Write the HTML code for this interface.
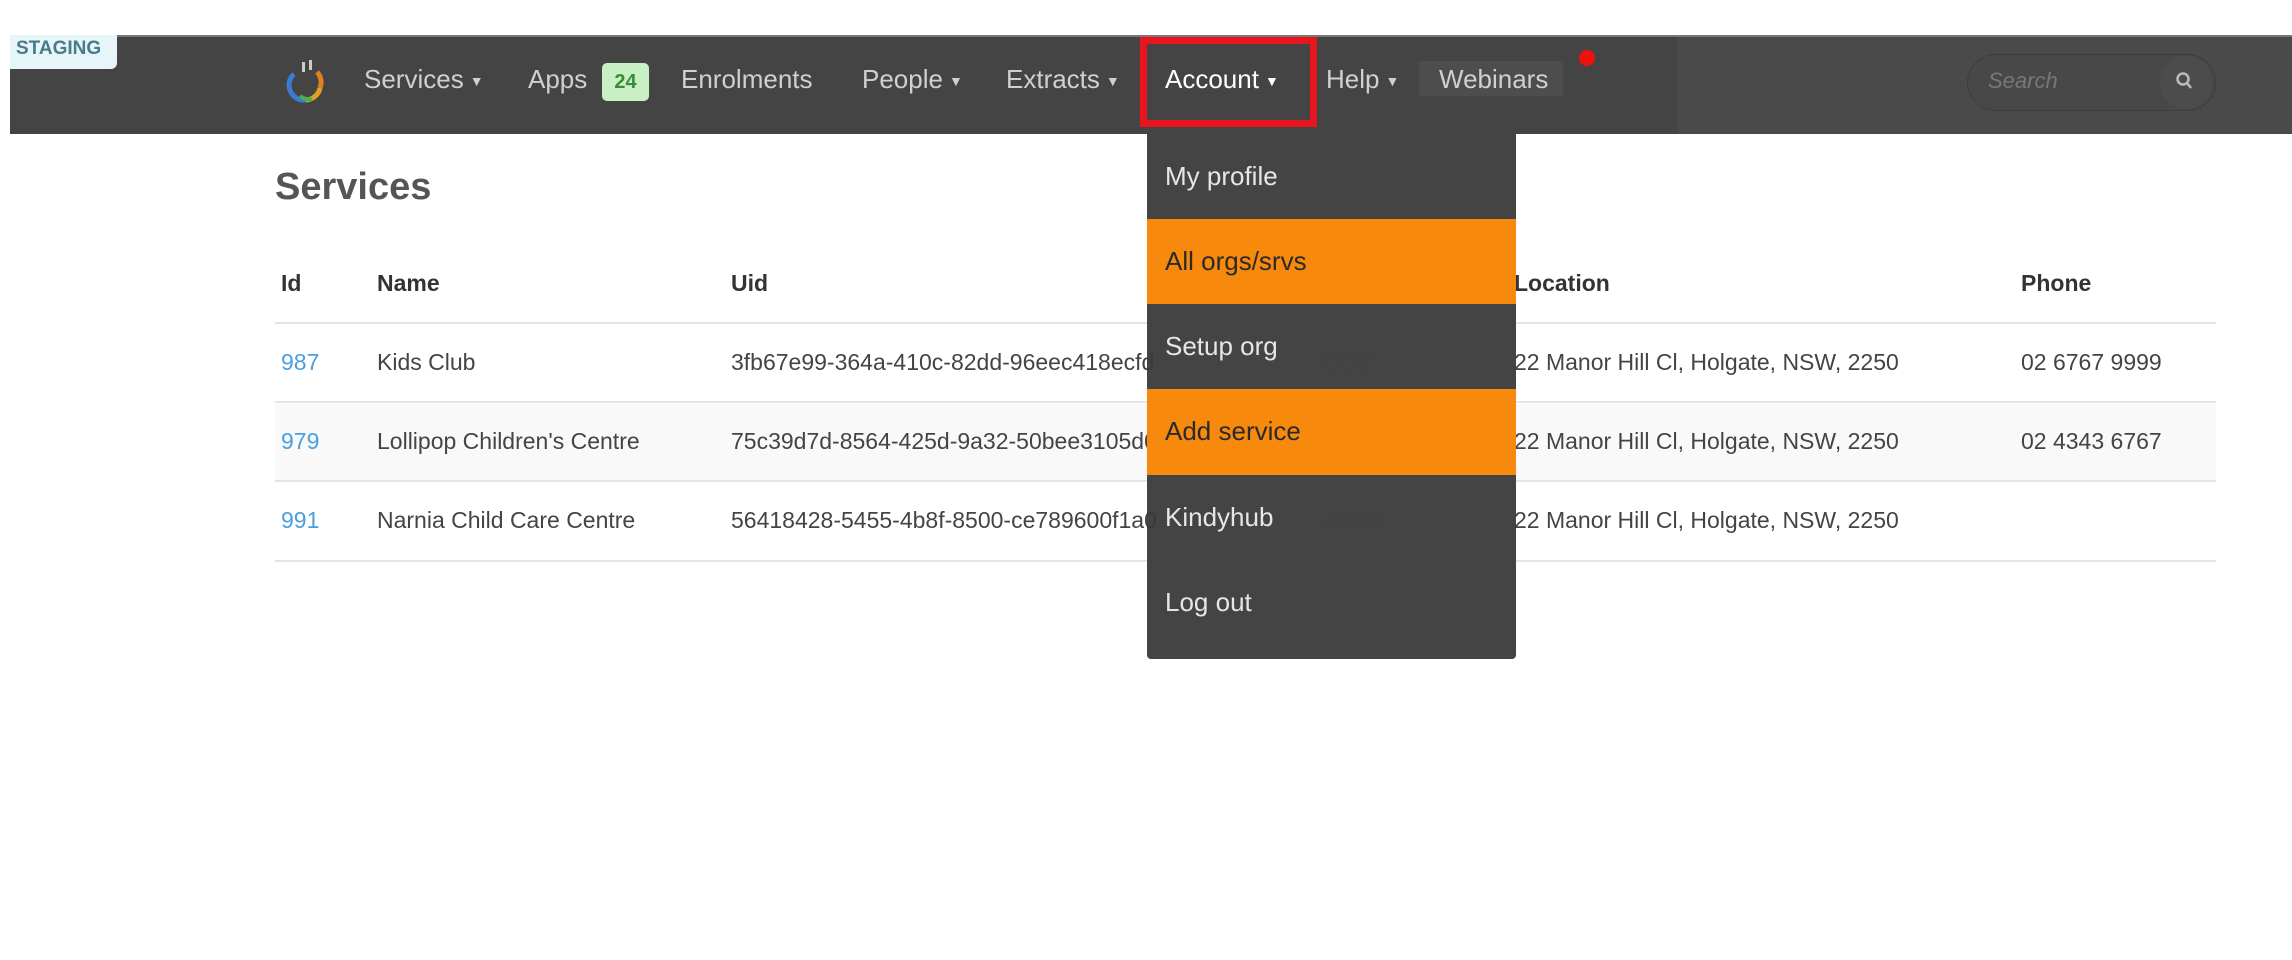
<!DOCTYPE html>
<html><head><meta charset="utf-8"><style>
*{margin:0;padding:0;box-sizing:border-box}
body{width:2292px;height:960px;background:#fff;font-family:"Liberation Sans",sans-serif;position:relative;overflow:hidden}
.a{position:absolute;white-space:nowrap}
.nav{left:10px;top:35px;width:2282px;height:99px;background:#4a4a4a;border-top:2px solid #777}
.navl{left:10px;top:37px;width:1668px;height:97px;background:#444}
.nt{top:62px;font-size:26px;color:#d0d0d0;line-height:34px}
.car{font-size:14px;vertical-align:middle;margin-left:6px}
.dd{left:1147px;top:134px;width:369px;height:525px;background:rgba(58,58,58,0.95);border-radius:0 0 4px 4px}
.it{position:absolute;left:0;width:369px;height:85px;font-size:26px;color:#e6e6e6;padding-left:18px;line-height:85px}
.or{background:rgba(255,140,10,0.96);color:#2a2a2a}
.th{font-size:23px;font-weight:bold;color:#333;top:270px}
.td{font-size:23px;color:#444}
.ln{left:275px;width:1941px;height:2px;background:#e3e5e8}
</style></head><body>
<div class="a nav"></div>
<div class="a navl"></div>
<div class="a" style="left:10px;top:35px;width:107px;height:34px;background:#e6f5f8;border-radius:0 0 6px 0;font-size:19px;font-weight:bold;color:#4a7b8c;padding:3px 0 0 6px">STAGING</div>
<svg class="a" style="left:286px;top:58px" width="42" height="46" viewBox="0 0 42 46">
<path d="M8 16 A15 15 0 0 0 20 42" stroke="#3b7bd0" stroke-width="5" fill="none"/>
<path d="M20 42 A15 15 0 0 0 34 30" stroke="#e0a020" stroke-width="5" fill="none"/>
<path d="M14 38 A15 15 0 0 0 26 41" stroke="#4caf50" stroke-width="4" fill="none"/>
<path d="M34 30 A15 15 0 0 0 31 14" stroke="#e08020" stroke-width="5" fill="none"/>
<rect x="16" y="4" width="3" height="10" fill="#ccc"/><rect x="23" y="2" width="3" height="10" fill="#ccc"/></svg>
<div class="a nt" style="left:364px">Services<span class="car">▼</span></div>
<div class="a nt" style="left:528px">Apps</div>
<div class="a" style="left:602px;top:63px;width:47px;height:38px;background:#c8f0c4;border-radius:5px;color:#3a8a3a;font-size:20px;font-weight:bold;text-align:center;line-height:38px">24</div>
<div class="a nt" style="left:681px">Enrolments</div>
<div class="a nt" style="left:862px">People<span class="car">▼</span></div>
<div class="a nt" style="left:1006px">Extracts<span class="car">▼</span></div>
<div class="a" style="left:1140px;top:37px;width:177px;height:90px;border:7px solid #e8141e"></div>
<div class="a nt" style="left:1165px;color:#fff">Account<span class="car">▼</span></div>
<div class="a nt" style="left:1326px">Help<span class="car">▼</span></div>
<div class="a" style="left:1419px;top:61px;width:144px;height:35px;background:#4d4d4d"></div>
<div class="a nt" style="left:1439px">Webinars</div>
<div class="a" style="left:1579px;top:50px;width:16px;height:16px;border-radius:50%;background:#f01010"></div>
<div class="a" style="left:1967px;top:54px;width:249px;height:57px;border-radius:29px;background:#484848;border:1px solid #3e3e3e"></div>
<div class="a" style="left:1988px;top:68px;font-size:22px;font-style:italic;color:#777">Search</div>
<div class="a" style="left:2160px;top:56px;width:52px;height:53px;border-radius:26px;background:#4c4c4c"></div>
<svg class="a" style="left:2174px;top:70px" width="20" height="22"><circle cx="9" cy="9" r="5.5" stroke="#bbb" stroke-width="2.5" fill="none"/><path d="M13 13 L17 18" stroke="#bbb" stroke-width="2.5"/></svg>

<div class="a" style="left:275px;top:166px;font-size:38px;font-weight:bold;color:#555">Services</div>
<div class="a th" style="left:281px">Id</div>
<div class="a th" style="left:377px">Name</div>
<div class="a th" style="left:731px">Uid</div>
<div class="a th" style="left:1323px">Type</div>
<div class="a th" style="left:1514px">Location</div>
<div class="a th" style="left:2021px">Phone</div>
<div class="a ln" style="top:322px"></div>
<div class="a" style="left:275px;top:404px;width:1941px;height:77px;background:#f9f9f9"></div>
<div class="a ln" style="top:401px"></div>
<div class="a ln" style="top:480px"></div>
<div class="a ln" style="top:560px"></div>
<div class="a td" style="left:281px;top:349px;color:#4a9fe0">987</div>
<div class="a td" style="left:377px;top:349px">Kids Club</div>
<div class="a td" style="left:731px;top:349px">3fb67e99-364a-410c-82dd-96eec418ecfd</div>
<div class="a td" style="left:1323px;top:349px;color:#ccc">OCC</div>
<div class="a td" style="left:1514px;top:349px">22 Manor Hill Cl, Holgate, NSW, 2250</div>
<div class="a td" style="left:2021px;top:349px">02 6767 9999</div>
<div class="a td" style="left:281px;top:428px;color:#4a9fe0">979</div>
<div class="a td" style="left:377px;top:428px">Lollipop Children's Centre</div>
<div class="a td" style="left:731px;top:428px">75c39d7d-8564-425d-9a32-50bee3105d02</div>
<div class="a td" style="left:1323px;top:428px;color:#ccc">ZCDC</div>
<div class="a td" style="left:1514px;top:428px">22 Manor Hill Cl, Holgate, NSW, 2250</div>
<div class="a td" style="left:2021px;top:428px">02 4343 6767</div>
<div class="a td" style="left:281px;top:507px;color:#4a9fe0">991</div>
<div class="a td" style="left:377px;top:507px">Narnia Child Care Centre</div>
<div class="a td" style="left:731px;top:507px">56418428-5455-4b8f-8500-ce789600f1a0</div>
<div class="a td" style="left:1323px;top:507px;color:#ccc">ZCDC</div>
<div class="a td" style="left:1514px;top:507px">22 Manor Hill Cl, Holgate, NSW, 2250</div>

<div class="a dd">
<div class="it" style="top:0">My profile</div>
<div class="it or" style="top:85px">All orgs/srvs</div>
<div class="it" style="top:170px">Setup org</div>
<div class="it or" style="top:255px;height:86px">Add service</div>
<div class="it" style="top:341px">Kindyhub</div>
<div class="it" style="top:426px">Log out</div>
</div>
</body></html>
